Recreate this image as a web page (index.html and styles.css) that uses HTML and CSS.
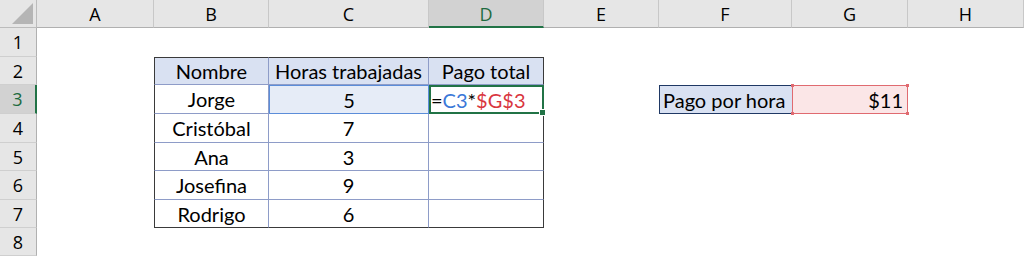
FILE: index.html
```html
<!DOCTYPE html>
<html lang="es">
<head>
<meta charset="utf-8">
<title>Hoja1</title>
<link rel="stylesheet" href="styles.css">
</head>
<body>
<div class="sheet">
  <!-- column headers -->
  <div class="corner"><span class="corner-tri"></span></div>
  <div class="colh">A</div>
  <div class="colh">B</div>
  <div class="colh">C</div>
  <div class="colh sel">D</div>
  <div class="colh">E</div>
  <div class="colh">F</div>
  <div class="colh">G</div>
  <div class="colh">H</div>

  <!-- row 1 -->
  <div class="rowh">1</div>
  <div class="c"></div><div class="c"></div><div class="c"></div><div class="c"></div>
  <div class="c"></div><div class="c"></div><div class="c"></div><div class="c"></div>

  <!-- row 2 -->
  <div class="rowh">2</div>
  <div class="c"></div>
  <div class="c t th tl">Nombre</div>
  <div class="c t th">Horas trabajadas</div>
  <div class="c t th tr">Pago total</div>
  <div class="c"></div><div class="c"></div><div class="c"></div><div class="c"></div>

  <!-- row 3 -->
  <div class="rowh sel">3</div>
  <div class="c"></div>
  <div class="c t tl">Jorge</div>
  <div class="c t ref">5</div>
  <div class="c t tr edit"><span class="f-op">=</span><span class="f-c3">C3</span><span class="f-op">*</span><span class="f-g3">$G$3</span><span class="handle"></span></div>
  <div class="c"></div>
  <div class="c label">Pago por hora</div>
  <div class="c rate">$11<span class="dot d1"></span><span class="dot d2"></span><span class="dot d3"></span><span class="dot d4"></span></div>
  <div class="c"></div>

  <!-- row 4 -->
  <div class="rowh">4</div>
  <div class="c"></div>
  <div class="c t tl">Cristóbal</div>
  <div class="c t">7</div>
  <div class="c t tr"></div>
  <div class="c"></div><div class="c"></div><div class="c"></div><div class="c"></div>

  <!-- row 5 -->
  <div class="rowh">5</div>
  <div class="c"></div>
  <div class="c t tl">Ana</div>
  <div class="c t">3</div>
  <div class="c t tr"></div>
  <div class="c"></div><div class="c"></div><div class="c"></div><div class="c"></div>

  <!-- row 6 -->
  <div class="rowh">6</div>
  <div class="c"></div>
  <div class="c t tl">Josefina</div>
  <div class="c t">9</div>
  <div class="c t tr"></div>
  <div class="c"></div><div class="c"></div><div class="c"></div><div class="c"></div>

  <!-- row 7 -->
  <div class="rowh">7</div>
  <div class="c"></div>
  <div class="c t tl tb">Rodrigo</div>
  <div class="c t tb">6</div>
  <div class="c t tr tb"></div>
  <div class="c"></div><div class="c"></div><div class="c"></div><div class="c"></div>

  <!-- row 8 -->
  <div class="rowh">8</div>
  <div class="c"></div><div class="c"></div><div class="c"></div><div class="c"></div>
  <div class="c"></div><div class="c"></div><div class="c"></div><div class="c"></div>
</div>
</body>
</html>
```

FILE: styles.css
```css
html, body {
  margin: 0;
  padding: 0;
  background: #ffffff;
}

.sheet {
  display: grid;
  grid-template-columns: 37px 117px 115px 160px 115px 115px 133px 116px 116px;
  grid-template-rows: 28px 29px 28px 29px 29px 28px 29px 28px 28px;
  width: 1024px;
  height: 256px;
  overflow: hidden;
  font-family: Lato, "Liberation Sans", sans-serif;
  color: #000;
}

.sheet > div {
  box-sizing: border-box;
  position: relative;
  display: flex;
  align-items: center;
  justify-content: center;
  white-space: nowrap;
}

/* headers */
.corner {
  background: #e6e6e6;
  border-right: 1px solid #bcbcbc;
  border-bottom: 1px solid #bcbcbc;
}
.corner-tri {
  position: absolute;
  right: 3px;
  bottom: 3px;
  width: 0;
  height: 0;
  border-left: 21px solid transparent;
  border-bottom: 21px solid #b5b5b5;
}

.colh {
  background: #e6e6e6;
  border-right: 1px solid #c8c8c8;
  border-bottom: 1px solid #b0b0b0;
  font-family: "Open Sans", "Noto Sans", sans-serif;
  font-size: 18px;
  padding-top: 1px;
}
.colh.sel {
  background: #d2d2d2;
  color: #1e6b3f;
  border-bottom: 2px solid #217346;
}

.rowh {
  background: #e6e6e6;
  border-right: 1px solid #b0b0b0;
  border-bottom: 1px solid #cfcfcf;
  font-family: "Open Sans", "Noto Sans", sans-serif;
  font-size: 18px;
}
.rowh.sel {
  background: #d2d2d2;
  color: #1e6b3f;
  border-right: 2px solid #217346;
}

/* cells */
.c {
  background: #ffffff;
  font-size: 20px;
}

/* data table B2:D7 */
.t {
  border-right: 1px solid #8e9cc8;
  border-bottom: 1px solid #8e9cc8;
}
.t.th {
  background: #d9e1f2;
  border-top: 1px solid #3a3a3a;
}
.t.tl {
  border-left: 1px solid #3a3a3a;
}
.t.tr {
  border-right: 1px solid #3a3a3a;
}
.t.tb {
  border-bottom: 1px solid #3a3a3a;
}

/* referenced range C3 */
.t.ref {
  background: #e6ecf7;
  border: 1px solid #5b8dd9;
}

/* cell being edited D3 */
.t.edit {
  z-index: 1;
  justify-content: flex-start;
  border: 2px solid #217346;
  padding-left: 0;
}
.f-op { color: #000; }
.f-c3 { color: #3a78d8; }
.f-g3 { color: #d9363e; }
.handle {
  position: absolute;
  right: -4px;
  bottom: -4px;
  width: 5px;
  height: 5px;
  background: #217346;
  border: 1px solid #fff;
}

/* F3 label */
.c.label {
  background: #d9e1f2;
  border: 1px solid #1f3864;
  border-right: none;
  justify-content: flex-start;
  padding-left: 3px;
}

/* G3 value referenced by the formula */
.c.rate {
  z-index: 1;
  background: #fbe6e7;
  border: 1px solid #e06a70;
  justify-content: flex-end;
  padding-right: 4px;
}
.dot {
  position: absolute;
  width: 3px;
  height: 3px;
  background: #e06a70;
}
.d1 { left: -2px; top: -2px; }
.d2 { right: -2px; top: -2px; }
.d3 { left: -2px; bottom: -2px; }
.d4 { right: -2px; bottom: -2px; }
```
